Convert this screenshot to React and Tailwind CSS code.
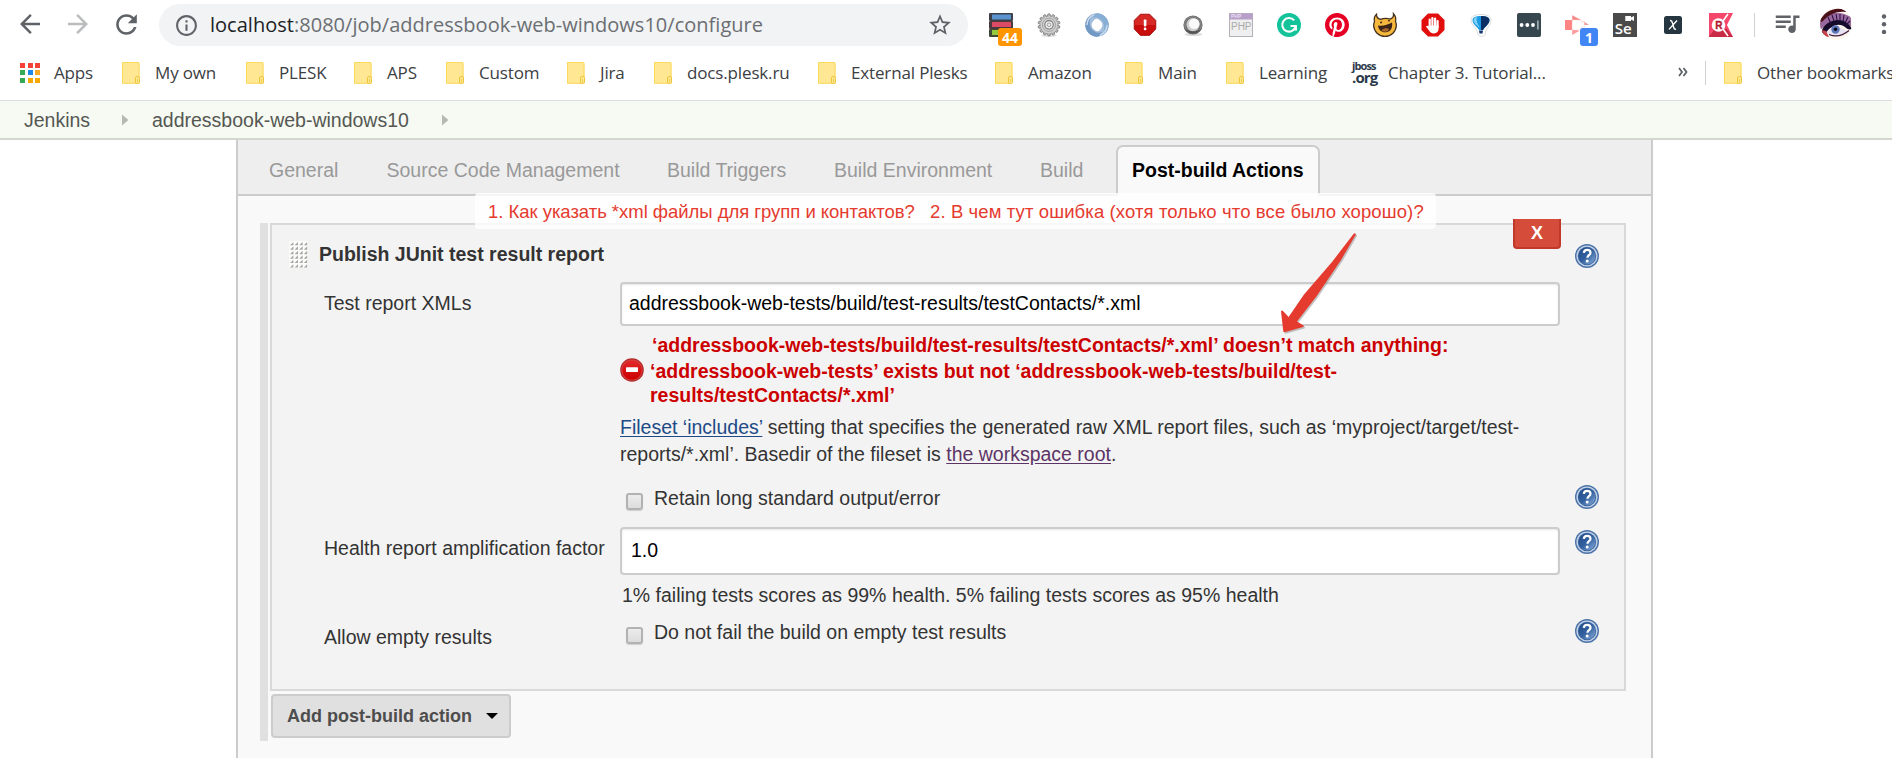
import React from "react";

const MATERIAL = {
  back: "M20 11H7.83l5.59-5.59L12 4l-8 8 8 8 1.41-1.41L7.83 13H20v-2z",
  forward: "M4 13h12.17l-5.59 5.59L12 20l8-8-8-8-1.41 1.41L16.17 11H4v2z",
  reload:
    "M17.65 6.35C16.2 4.9 14.21 4 12 4c-4.42 0-7.99 3.58-7.99 8s3.57 8 7.99 8c3.73 0 6.84-2.55 7.73-6h-2.08c-.82 2.33-3.04 4-5.65 4-3.31 0-6-2.69-6-6s2.69-6 6-6c1.66 0 3.14.69 4.22 1.78L13 11h7V4l-2.35 2.35z",
  info: "M11 7h2v2h-2zm0 4h2v6h-2zm1-9C6.48 2 2 6.48 2 12s4.48 10 10 10 10-4.48 10-10S17.52 2 12 2zm0 18c-4.41 0-8-3.59-8-8s3.59-8 8-8 8 3.59 8 8-3.59 8-8 8z",
  star: "M22 9.24l-7.19-.62L12 2 9.19 8.63 2 9.24l5.46 4.73L5.82 21 12 17.27 18.18 21l-1.63-7.03L22 9.24zM12 15.4l-3.76 2.27 1-4.28-3.32-2.88 4.38-.38L12 6.1l1.71 4.04 4.38.38-3.32 2.88 1 4.28L12 15.4z",
  queue:
    "M15 6H3v2h12V6zm0 4H3v2h12v-2zM3 16h8v-2H3v2zM17 6v8.18c-.31-.11-.65-.18-1-.18-1.66 0-3 1.34-3 3s1.34 3 3 3 3-1.34 3-3V8h3V6h-5z",
};

function Glyph({ name, className }) {
  return (
    <svg viewBox="0 0 24 24" fill="currentColor" className={className}>
      <path d={MATERIAL[name]} />
    </svg>
  );
}

function Ext({ children }) {
  return (
    <div className="relative w-12 h-[50px] shrink-0 flex items-center justify-center">
      <svg viewBox="0 0 24 24" className="w-6 h-6 overflow-visible">
        {children}
      </svg>
    </div>
  );
}

const OCTAGON = "M7 0.5h10L23.5 7v10L17 23.5H7L0.5 17V7z";
const GEAR_ANGLES = [0, 25.7, 51.4, 77.1, 102.9, 128.6, 154.3];

function Extensions() {
  return (
    <div className="flex">
      <div className="relative">
        <Ext>
          <rect x="0" y="0" width="24" height="8" rx="1" fill="#3d4046" />
          <rect x="3" y="1.5" width="19" height="5" fill="#5b93d0" />
          <rect x="0" y="8" width="24" height="8" rx="1" fill="#4a3a40" />
          <rect x="3" y="9" width="19" height="5" fill="#dc4a63" />
          <rect x="0" y="16" width="24" height="8" rx="1" fill="#3f4a36" />
          <rect x="3" y="17" width="19" height="5" fill="#94c83d" />
        </Ext>
        <div className="absolute left-[21px] top-[28px] w-6 h-[18px] rounded-[3px] bg-[#ff9500] text-white text-[14px] leading-[19px] font-bold text-center font-['Open_Sans',sans-serif]">
          44
        </div>
      </div>
      <Ext>
        <ellipse cx="12" cy="22.500" rx="8" ry="1.500" fill="#ddd" />
        <g fill="#b5b5b5" stroke="#6a6a6a" strokeWidth="0.7">
          {GEAR_ANGLES.map((a) => (
            <rect key={a} x="10.600" y="0.8" width="2.800" height="22" rx="1.200" transform={`rotate(${a} 12 11.8)`} />
          ))}
        </g>
        <circle cx="12" cy="11.800" r="8.600" fill="#cfcfcf" />
        <circle cx="12" cy="11.800" r="6.600" fill="none" stroke="#a5a5a5" strokeWidth="1" />
        <circle cx="12" cy="11.800" r="4.200" fill="#f3f3f3" stroke="#777" strokeWidth="1.100" />
        <circle cx="12" cy="11.800" r="1.900" fill="#e8e8e8" stroke="#8a8a8a" strokeWidth="0.8" />
      </Ext>
      <Ext>
        <circle cx="12" cy="12" r="8.600" fill="none" stroke="#a3bfdd" strokeWidth="6.400" />
        <path d="M12 .3C18 .3 23.700 5.500 23.700 12c0 5-3 9-7.200 10.800C20.500 17 20.500 9 14.500 5.500 12 4 9 4 6.500 5.200 8 2.500 9.500 .6 12 .3z" fill="#88aed5" />
        <path d="M12 23.700C6 23.700 .3 18.500 .3 12c0-5 3-9 7.200-10.800C3.500 7 3.500 15 9.500 18.500c2.500 1.500 5.500 1.500 8 .3-1.500 2.700-3 4.600-5.500 4.900z" fill="#7299c4" />
        <path d="M2 12C2 7 5 3 9 2M22 12c0 5-3 9-7 10" fill="none" stroke="#c7d9ec" strokeWidth="1.600" />
        <ellipse cx="12" cy="12" rx="4.200" ry="6.400" transform="rotate(-8 12 12)" fill="#fff" />
      </Ext>
      <Ext>
        <path d="M7.400 1.200h9.200l6.200 6.200v8.600l-6.200 6.400H7.400L1.200 16V7.400z" fill="#c90d0d" stroke="#9e0909" strokeWidth="0.8" />
        <path d="M7.500 2h9l5.500 5.600v4.400H2V7.600z" fill="#e03a35" opacity="0.6" />
        <rect x="10.800" y="6.400" width="2.600" height="7" rx="0.8" fill="#fff" />
        <rect x="10.800" y="14.600" width="2.600" height="2.600" rx="1" fill="#fff" />
      </Ext>
      <Ext>
        <ellipse cx="12.500" cy="21.500" rx="9" ry="1.600" fill="#ddd" />
        <circle cx="12" cy="12" r="9.600" fill="#6e6e6e" />
        <circle cx="12" cy="12" r="8.200" fill="none" stroke="#8c8c8c" strokeWidth="1" />
        <circle cx="12" cy="11.600" r="6.600" fill="#cfcfcf" />
        <circle cx="13.200" cy="10.800" r="5.300" fill="#fafafa" />
        <path d="M3.500 15.500a9.600 9.600 0 0 0 17 0c-3 3.500-12 4.500-17 0z" fill="#4a4a4a" opacity="0.8" />
      </Ext>
      <Ext>
        <rect x="0.500" y="0.500" width="23" height="23" fill="#efefef" stroke="#b5b0b8" />
        <rect x="0.500" y="0.500" width="23" height="6" fill="#b79fc9" />
        <text x="2" y="5.400" fontSize="5" fontWeight="700" fill="#e9def2" fontFamily="Liberation Sans">PHP</text>
        <text x="2" y="17" fontSize="10" fill="#aaa" textLength="20.500" fontFamily="Liberation Sans">PHP</text>
      </Ext>
      <Ext>
        <circle cx="12" cy="12" r="12" fill="#15c39a" />
        <path d="M17.200 7.400A6.800 6.800 0 1 0 18.700 13.200M18.900 17.600v-4.600h-5.400" fill="none" stroke="#fff" strokeWidth="2.100" />
      </Ext>
      <Ext>
        <path
          fill="#e60023"
          d="M12 0C5.373 0 0 5.372 0 12c0 5.084 3.163 9.426 7.627 11.174-.105-.949-.2-2.405.042-3.441.218-.937 1.407-5.965 1.407-5.965s-.359-.719-.359-1.782c0-1.668.967-2.914 2.171-2.914 1.023 0 1.518.769 1.518 1.690 0 1.029-.655 2.568-.994 3.995-.283 1.194.599 2.169 1.777 2.169 2.133 0 3.772-2.249 3.772-5.495 0-2.873-2.064-4.882-5.012-4.882-3.414 0-5.418 2.561-5.418 5.207 0 1.031.397 2.138.893 2.738a.36.36 0 0 1 .083.345l-.333 1.360c-.053.220-.174.267-.402.161-1.499-.698-2.436-2.889-2.436-4.649 0-3.785 2.750-7.262 7.929-7.262 4.163 0 7.398 2.967 7.398 6.931 0 4.136-2.607 7.464-6.227 7.464-1.216 0-2.359-.631-2.750-1.378l-.748 2.853c-.271 1.043-1.002 2.350-1.492 3.146C9.570 23.812 10.763 24 12 24c6.627 0 12-5.373 12-12S18.627 0 12 0z"
        />
      </Ext>
      <Ext>
        <path
          d="M3.500 1.200C1.500 3 .8 5.500 1.500 8.500 .8 10 .600 11.500 .700 13 1.200 19 6 23.300 12 23.300S22.800 19 23.300 13c.1-1.500-.1-3-.8-4.500C23.300 5.500 22.500 3 20.500 .8c.3 2.500-1 4.500-3.500 5.200-3-1-6.500-.9-9.500 .4C5 5.700 3.300 3.700 3.500 1.200z"
          fill="#f5b83d"
          stroke="#44301e"
          strokeWidth="1.300"
        />
        <path d="M5 12.500c5 .8 9.500-.5 14-3 1 5-1.500 9.500-6 9.800C8.500 19.600 5.500 17 5 12.500z" fill="#3b2417" />
        <path d="M8.500 17.200c2-2 5-2.400 7.700-1.300-1.400 3.400-5.200 3.900-7.700 1.300z" fill="#a9662c" />
        <path d="M7.500 10.200l1.200-1.600M15.200 8.200l1.600-.8" fill="none" stroke="#3b2417" strokeWidth="1.500" />
      </Ext>
      <Ext>
        <path d={OCTAGON} fill="#e20d0d" />
        <g stroke="#fff" strokeWidth="2.200" strokeLinecap="round" fill="none">
          <path d="M8.700 6.500v8M11.400 5v8M14.100 5.500v8M16.600 8v6" />
        </g>
        <path d="M7.600 12.500h10v3c0 3-1.600 4.900-4.600 4.900-2.300 0-3.600-1-4.800-2.700L5 13.500c.4-1.100 1.700-1 2.600-.200z" fill="#fff" />
      </Ext>
      <Ext>
        <path d="M12 1.500c5.500 0 10 1.500 10 5.500 0 5-5 7.500-6 14.500-.500 2.500-6.500 2.500-7 0C8 14.500 2 12 2 7c0-4 4.500-5.500 10-5.500z" fill="#fff" stroke="#dcdcdc" strokeWidth="1" />
        <path d="M12 3c5 0 8.500 1 8.500 4.200 0 3.800-4.500 6.300-6.500 9.800h-4C8 13.500 3.500 11 3.500 7.200 3.500 4 7 3 12 3z" fill="#1b9be3" />
        <path d="M12 3c5 0 8.500 1 8.500 4.200 0 3.800-4.500 6.300-6.500 9.800h-2z" fill="#0c2f66" />
        <path d="M9 3.800c-2 1-2 5 2 11C6 11 4.500 9 4.500 7c0-1.800 2-2.700 4.500-3.200z" fill="#7fd0f5" />
        <path d="M10 17.500h4l-.500 3h-3z" fill="#14386b" />
      </Ext>
      <Ext>
        <rect width="24" height="24" rx="2" fill="#37474f" />
        <circle cx="4.600" cy="12" r="1.900" fill="#fff" />
        <circle cx="10.300" cy="12" r="1.900" fill="#fff" />
        <circle cx="16" cy="12" r="1.900" fill="#fff" />
        <rect x="20.300" y="7.500" width="1.200" height="9" fill="#cfd8dc" />
      </Ext>
      <div className="relative">
        <Ext>
          <path d="M0 7h7v10H0z" fill="#ff8585" />
          <path d="M7.200 2.200l9 4.800-9 3z" fill="#f78a8a" />
          <path d="M7.200 22l7-4-7-3.500z" fill="#ff9a9a" />
          <path d="M17.500 7.500l6.500 4.500h-5z" fill="#f59a9a" />
          <path d="M7.200 7h9v3l3-2v8l-3-2v3h-9z" fill="#fff" stroke="#fbc9c9" strokeWidth="0.500" />
        </Ext>
        <div className="absolute left-[27px] top-[28px] w-[18px] h-[18px] rounded-[3px] bg-[#4285f4] text-white text-[14px] leading-[19px] font-bold text-center font-['Open_Sans',sans-serif]">
          1
        </div>
      </div>
      <Ext>
        <rect width="24" height="24" fill="#4a4a4a" />
        <text x="1.800" y="20.800" fontSize="13.500" fontWeight="600" fill="#fff" textLength="17" lengthAdjust="spacingAndGlyphs" fontFamily="Open Sans">Se</text>
        <path d="M12.300 3h5.700v1.600l3-1.600v5l-3-1.600V8h-5.700z" fill="#fff" />
      </Ext>
      <Ext>
        <rect x="3" y="3" width="18" height="18" rx="2.500" fill="#263640" />
        <path d="M9 7.500c1.500-.3 2 .5 2.500 2.500l1.200 4.500c.4 1.500.9 2 2.300 1.700M16 7.500L8 16.400" fill="none" stroke="#fff" strokeWidth="1.400" />
      </Ext>
      <Ext>
        <path d="M0 0h24l-6 12 6 12H0z" fill="#f5476b" />
        <path d="M0 24l5-7 13-1 6 8z" fill="#c92a46" />
        <circle cx="9.500" cy="12" r="6.800" fill="#fff" />
        <path d="M14 8l5-7M14 16l5 7" stroke="#fff" strokeWidth="1.600" />
        <text x="6.200" y="15.800" fontSize="10" fontWeight="700" fill="#b3182e" stroke="#b3182e" strokeWidth="0.300" fontFamily="Liberation Sans">R</text>
      </Ext>
    </div>
  );
}

function Avatar() {
  return (
    <svg viewBox="0 0 32 32" className="w-8 h-8 shrink-0">
      <defs>
        <clipPath id="face">
          <circle cx="16" cy="16" r="16" />
        </clipPath>
      </defs>
      <g clipPath="url(#face)">
        <rect width="32" height="32" fill="#fff6f0" />
        <path d="M0 13C6 5 18 1 31 9v10c-5-7-16-9-23-3L0 22z" fill="#9a6a9e" />
        <path d="M0 13C4 3 18-4 31 5c-10-3-20-1-29 9z" fill="#4a1019" />
        <path d="M1 25C3 17 10 12 18 12c6 0 11 3 14 9-3 1-5 0-7-2-4-3-9-3-13 0-4 2-6 6-8 8z" fill="#150c2b" />
        <path d="M8 9l3 7M12 7l2 6M16 6l1 6M20 6l0 7M24 7l-1 7M28 9l-3 6M30 13l-4 4" stroke="#2c1246" strokeWidth="1.100" />
        <path d="M7 25c3-6 10-8 16-4 2 1 4 2 6 2-5 5-15 7-22 2z" fill="#e6e2f2" />
        <circle cx="15.500" cy="21.500" r="4.200" fill="#5b74b5" />
        <circle cx="15.500" cy="21.200" r="1.800" fill="#0b0b1c" />
        <path d="M9 26.500c7 3 14 1 20-4" fill="none" stroke="#41203a" strokeWidth="1.200" />
        <path d="M2 22c0 4 3 7 7 7l-3-6z" fill="#c4424a" />
      </g>
    </svg>
  );
}

function Folder() {
  return (
    <svg viewBox="0 0 18 22" className="w-[18px] h-[22px] shrink-0">
      <path d="M0 0h16a1.500 1.500 0 0 1 1.500 1.500V21.500H0z" fill="#ffe793" />
      <path d="M0 .5h16q1 0 1 1V15M.5 0v21.300H13" fill="none" stroke="#fbd95c" strokeWidth="1" />
      <path d="M13.500 21.300V16q0-1.500 1.500-1.500h1q1.500 0 1.500 1.500v4q0 1.400-1.400 1.400z" fill="#ffe793" stroke="#eec63c" strokeWidth="1" />
      <path d="M15.500 17v3" stroke="#eec63c" strokeWidth="0.800" />
    </svg>
  );
}

const BOOKMARKS = [
  ["My own", "w-[124px]"],
  ["PLESK", "w-[108px]"],
  ["APS", "w-[92px]"],
  ["Custom", "w-[121px]"],
  ["Jira", "w-[87px]"],
  ["docs.plesk.ru", "w-[164px]"],
  ["External Plesks", "w-[177px]"],
  ["Amazon", "w-[130px]"],
  ["Main", "w-[101px]"],
  ["Learning", "w-[126px]"],
];

const APP_COLORS = ["#f44336", "#f44336", "#f44336", "#34a853", "#1e88e5", "#f9a825", "#34a853", "#f9a800", "#f9a800"];

function BookmarksBar() {
  return (
    <div className="flex items-center h-[46px] pl-5 overflow-hidden whitespace-nowrap text-[17px] leading-6 tracking-[-0.15px] text-[#3c4043] font-['Open_Sans','Noto_Sans',sans-serif]">
      <div className="flex items-center w-[102px] shrink-0">
        <div className="grid grid-cols-3 gap-[2.5px] w-5 h-5 mt-[-1px]">
          {APP_COLORS.map((c, i) => (
            <span key={i} style={{ backgroundColor: c }} />
          ))}
        </div>
        <span className="ml-[14px]">Apps</span>
      </div>
      {BOOKMARKS.map(([name, width]) => (
        <div key={name} className={`flex items-center shrink-0 ${width}`}>
          <Folder />
          <span className="ml-[15px]">{name}</span>
        </div>
      ))}
      <div className="flex items-center shrink-0 w-[325px]">
        <div className="flex flex-col w-[25px] h-6 shrink-0 mt-[-2px] font-bold text-[#2b3a4a] tracking-[-0.9px]">
          <span className="text-[11px] leading-[11px] font-['Open_Sans',sans-serif]">jboss</span>
          <span className="text-[15px] leading-[12px] font-['Open_Sans',sans-serif]">.org</span>
        </div>
        <span className="ml-[11px]">Chapter 3. Tutorial...</span>
      </div>
      <svg viewBox="0 0 10 10" className="w-[10px] h-[10px] shrink-0 ml-[1px] mt-[-2px]">
        <path d="M1 1l3 4-3 4M5.500 1l3 4-3 4" fill="none" stroke="#5f6368" strokeWidth="1.800" />
      </svg>
      <div className="w-px h-6 bg-[#cfd1d4] ml-[17px] mr-[18px] shrink-0" />
      <Folder />
      <span className="ml-[15px]">Other bookmarks</span>
    </div>
  );
}

function BrowserChrome() {
  return (
    <div className="h-[101px] bg-white border-b border-[#dadce0]">
      <div className="flex items-start h-[50px] pl-[15px]">
        <Glyph name="back" className="w-[30px] h-[30px] mt-[9px] text-[#5f6368]" />
        <Glyph name="forward" className="w-[30px] h-[30px] mt-[9px] ml-[18px] text-[#babcbe]" />
        <Glyph name="reload" className="w-[31px] h-[31px] mt-[9px] ml-[18px] text-[#5f6368]" />
        <div className="flex items-center w-[809px] h-[42px] mt-1 ml-[17px] rounded-full bg-[#f1f3f4] shrink-0">
          <Glyph name="info" className="w-[25px] h-[25px] ml-[15px] shrink-0 text-[#5f6368]" />
          <span className="ml-[11px] w-[701px] whitespace-nowrap text-[20px] leading-6 tracking-[0.02px] text-[#6b6e72] font-['Open_Sans','Noto_Sans',sans-serif]">
            <span className="text-[#202124]">localhost</span>:8080/job/addressbook-web-windows10/configure
          </span>
          <Glyph name="star" className="w-[26px] h-[26px] ml-[16px] shrink-0 text-[#5f6368]" />
        </div>
        <div className="ml-[9px]">
          <Extensions />
        </div>
        <div className="w-px h-6 mt-[13px] ml-[9px] bg-[#cfd1d4]" />
        <Glyph name="queue" className="w-[30px] h-[30px] ml-[17px] mt-[8px] shrink-0 text-[#5f6368]" />
        <div className="ml-[18px] mt-2">
          <Avatar />
        </div>
        <svg viewBox="0 0 6 20" className="w-[6px] h-5 ml-[29px] mt-[14px] shrink-0">
          <circle cx="3" cy="2.500" r="2.200" fill="#5f6368" />
          <circle cx="3" cy="10.200" r="2.200" fill="#5f6368" />
          <circle cx="3" cy="17.900" r="2.200" fill="#5f6368" />
        </svg>
      </div>
      <BookmarksBar />
    </div>
  );
}

function CrumbArrow() {
  return (
    <svg viewBox="0 0 7 12" className="w-[7px] h-3 shrink-0">
      <path d="M0 0.500l6.500 5.500L0 11.500z" fill="#b7b9b4" />
    </svg>
  );
}

function Breadcrumbs() {
  return (
    <div className="flex items-center h-[39px] pl-6 bg-[#f6faf2] border-b-2 border-[#d3d7cf] text-[#555753]">
      <span className="w-[98px] leading-6">Jenkins</span>
      <CrumbArrow />
      <span className="w-[290px] ml-[23px] leading-6">addressbook-web-windows10</span>
      <CrumbArrow />
    </div>
  );
}

const TABS = [
  ["General", "w-[117.5px]"],
  ["Source Code Management", "w-[280.5px]"],
  ["Build Triggers", "w-[167px]"],
  ["Build Environment", "w-[206px]"],
  ["Build", "w-[76px]"],
];

function Tabs() {
  return (
    <div className="flex h-14 pl-[31px] bg-[#eee] border-b-2 border-[#ccc] text-[#999]">
      {TABS.map(([name, width]) => (
        <div key={name} className={`shrink-0 pt-[18px] leading-6 whitespace-nowrap ${width}`}>
          {name}
        </div>
      ))}
      <div className="mt-[5px] -mb-0.5 w-[204px] pt-[11px] pl-[14px] leading-6 whitespace-nowrap font-bold text-black bg-[#f9f9f9] border-2 border-b-0 border-[#ccc] rounded-t-[7px]">
        Post-build Actions
      </div>
    </div>
  );
}

function Help() {
  return (
    <svg viewBox="0 0 24 24" className="w-6 h-6 shrink-0">
      <defs>
        <linearGradient id="help" x1="0" y1="0" x2="1" y2="1">
          <stop offset="0" stopColor="#204a87" />
          <stop offset="0.5" stopColor="#33619f" />
          <stop offset="1" stopColor="#8db0dc" />
        </linearGradient>
      </defs>
      <circle cx="12" cy="12" r="12" fill="#4b72a8" />
      <circle cx="12" cy="12" r="10.600" fill="#c3d3e8" />
      <circle cx="12" cy="12" r="9.200" fill="#3a659f" />
      <circle cx="12" cy="12" r="8.400" fill="url(#help)" />
      <path d="M8.800 8.800C9 6.600 10.400 5.800 12.100 5.800c1.900 0 3.400 1.100 3.400 2.900 0 2.400-3.100 2.500-3.100 5" fill="none" stroke="#fff" strokeWidth="2.200" />
      <circle cx="12.200" cy="17" r="1.500" fill="#fff" />
    </svg>
  );
}

function ErrorIcon() {
  return (
    <svg viewBox="0 0 24 24" className="w-6 h-6 shrink-0">
      <defs>
        <linearGradient id="stop" x1="0" y1="0" x2="0" y2="1">
          <stop offset="0" stopColor="#e22a2a" />
          <stop offset="1" stopColor="#cc0000" />
        </linearGradient>
      </defs>
      <circle cx="12" cy="12" r="11.800" fill="#b22a2a" />
      <circle cx="12" cy="12" r="10.600" fill="#d84444" />
      <circle cx="12" cy="12" r="9.800" fill="url(#stop)" />
      <rect x="6" y="9.300" width="12" height="4.600" rx="0.600" fill="#fff" />
    </svg>
  );
}

function Checkbox() {
  return (
    <span className="block w-[17px] h-[17px] shrink-0 ml-[6px] border-2 border-[#b2b2b2] rounded-[3px] bg-gradient-to-b from-[#ececec] to-[#dcdcdc] shadow-[0_1px_1px_rgba(0,0,0,0.15)]" />
  );
}

function Grip() {
  return (
    <svg viewBox="0 0 19 27" className="w-[19px] h-[27px] shrink-0">
      <rect width="19" height="27" fill="#fff" opacity="0.75" />
      {[0, 1, 2, 3, 4, 5].map((r) =>
        [0, 1, 2, 3].map((c) => (
          <path key={`${r}-${c}`} d={`M${1 + c * 4.6} ${4.3 + r * 4.45}h3.4v-3.4z`} fill="#a6a6a0" />
        )),
      )}
    </svg>
  );
}

function Row({ label, labelClass, children, help, helpClass, className }) {
  return (
    <div className={`flex items-start ${className}`}>
      <div className={`w-[348px] shrink-0 pl-[52px] leading-6 whitespace-nowrap ${labelClass}`}>{label}</div>
      <div className="w-[940px] shrink-0">{children}</div>
      {help && <div className={`ml-[15px] ${helpClass}`}><Help /></div>}
    </div>
  );
}

const FIELD =
  "flex items-center border-2 border-[#ccc] rounded-[4px] bg-white text-black pb-[2px] leading-6 whitespace-nowrap shadow-[inset_0_1px_2px_rgba(0,0,0,0.1)]";

function PublisherForm() {
  return (
    <div className="relative w-[1356px] h-[468px] bg-[#f3f3f3] border-2 border-[#d9d9d9]">
      <div className="absolute left-[1241px] top-[-6px] w-12 h-[30px] flex items-center justify-center bg-[#d54c3b] border-2 border-t-0 border-[#c0392b] rounded-b-[4px] text-white font-bold text-[18px] leading-6">
        X
      </div>
      <div className="flex items-start h-[57px] pt-4 pl-[17px]">
        <Grip />
        <div className="w-[1255.5px] pl-[11px] pt-[1px] leading-6 font-bold">Publish JUnit test result report</div>
        <div className="mt-[3px] ml-[11.500px]">
          <Help />
        </div>
      </div>
      <Row label="Test report XMLs" labelClass="pt-[9px]" className="h-[189px]">
        <div className={`${FIELD} h-11 pl-[7px]`}>addressbook-web-tests/build/test-results/testContacts/*.xml</div>
        <div className="flex h-[75px] mt-[7px] font-bold text-[#c00] whitespace-nowrap">
          <div className="pt-[25px]">
            <ErrorIcon />
          </div>
          <div className="ml-[6px]">
            <div className="h-[26px] pl-[2px] leading-6">‘addressbook-web-tests/build/test-results/testContacts/*.xml’ doesn’t match anything:</div>
            <div className="leading-6">‘addressbook-web-tests’ exists but not ‘addressbook-web-tests/build/test-</div>
            <div className="leading-6">results/testContacts/*.xml’</div>
          </div>
        </div>
        <div className="mt-[6px] leading-[27px] whitespace-nowrap">
          <div>
            <a className="text-[#204a87] underline underline-offset-2">Fileset ‘includes’</a> setting that specifies the generated raw XML report files, such as ‘myproject/target/test-
          </div>
          <div>
            reports/*.xml’. Basedir of the fileset is <a className="text-[#5c3566] underline underline-offset-2">the workspace root</a>.
          </div>
        </div>
      </Row>
      <Row className="h-[56px] pt-[13px]" help helpClass="mt-[1px]">
        <div className="flex items-start pt-[2px]">
          <div className="pt-[7px]"><Checkbox /></div>
          <span className="ml-[11px] leading-6">Retain long standard output/error</span>
        </div>
      </Row>
      <Row label="Health report amplification factor" labelClass="pt-[9px]" className="h-[93px]" help helpClass="mt-[3px]">
        <div className={`${FIELD} h-12 pl-[9px]`}>1.0</div>
        <div className="mt-2 pl-[2px] leading-6">1% failing tests scores as 99% health. 5% failing tests scores as 95% health</div>
      </Row>
      <Row label="Allow empty results" labelClass="pt-[5px]" className="h-10" help helpClass="mt-[-1px]">
        <div className="flex items-start">
          <div className="pt-[7px]"><Checkbox /></div>
          <span className="ml-[11px] leading-6">Do not fail the build on empty test results</span>
        </div>
      </Row>
    </div>
  );
}

const ARROW =
  "M1353.5 234q1.5-1.400 2.500.3L1341 260 1316 297 1297 321.500l6.500 4q.8 1-.5 1.500l-18.500 5.300q-1 0-1.200-1L1281 311.500q.6-1.500 2-.5l5.600 6L1304 294.500 1332 262z";

function Annotation() {
  return (
    <>
      <div className="absolute left-[475px] top-[193px] w-[961px] h-[36px] rounded-[4px] bg-white/80 pl-[13px] pt-[7px] whitespace-nowrap leading-6 text-[18.5px] text-[#e53a2e]">
        <span className="inline-block w-[442px] tracking-[-0.03px]">1. Как указать *xml файлы для групп и контактов?</span>
        <span className="tracking-[0.11px]">2. В чем тут ошибка (хотя только что все было хорошо)?</span>
      </div>
      <svg viewBox="1270 225 100 115" className="absolute left-[1270px] top-[225px] w-[100px] h-[115px]">
        <path d={ARROW} transform="translate(1.2 1.5)" fill="#8a8a8a" opacity="0.5" />
        <path d={ARROW} fill="#e53a2e" />
      </svg>
    </>
  );
}

export default function App() {
  return (
    <div className="relative w-[1892px] h-[758px] overflow-hidden bg-white text-[#333] text-[19.5px] font-['Liberation_Sans',Arial,sans-serif]">
      <BrowserChrome />
      <Breadcrumbs />
      <div className="ml-[236px] w-[1417px] h-[618px] bg-[#f9f9f9] border-x-2 border-[#ccc]">
        <Tabs />
        <div className="flex pt-[27px] pl-[22px]">
          <div className="w-[7.500px] h-[518px] bg-[#e0e0e0] shrink-0" />
          <div className="ml-[2.500px]">
            <PublisherForm />
            <div className="flex items-center w-[240px] h-11 mt-[3px] ml-[1px] pl-[14px] bg-[#e0e0e0] border-2 border-[#ccc] rounded-[4px] font-bold text-[#4d4d4d] whitespace-nowrap">
              <span className="w-[199px] leading-6 text-[18px]">Add post-build action</span>
              <svg viewBox="0 0 12 6" className="w-3 h-[6px]">
                <path d="M0 0h12L6 6z" fill="#000" />
              </svg>
            </div>
          </div>
        </div>
      </div>
      <Annotation />
    </div>
  );
}
